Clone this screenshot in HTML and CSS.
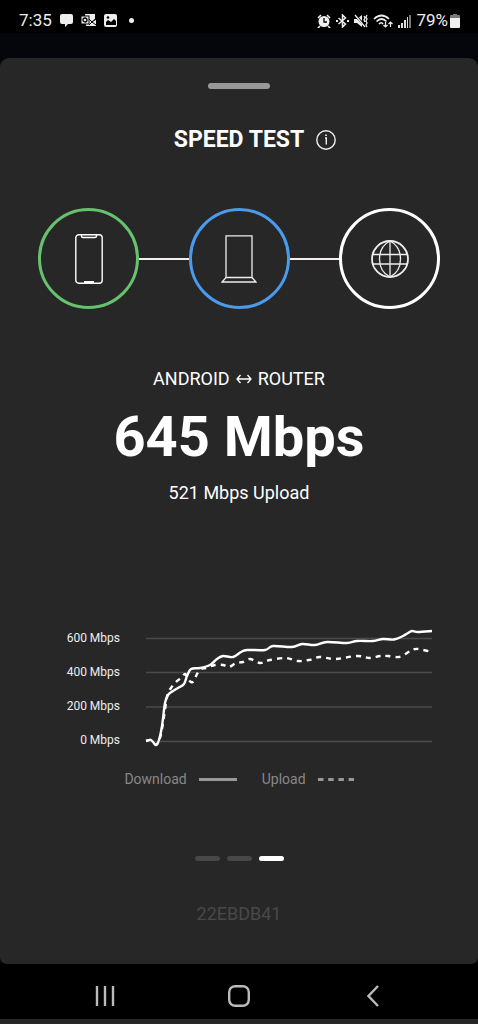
FILE: index.html
```html
<!DOCTYPE html>
<html lang="en">
<head>
<meta charset="utf-8">
<meta name="viewport" content="width=device-width, initial-scale=1">
<title>Speed Test</title>
<link rel="stylesheet" href="styles.css">
</head>
<body>
<header class="status">
  <div class="status-left">
    <span class="clock">7:35</span>
    <svg width="13" height="13" viewBox="0 0 13 13" fill="#eee"><path d="M2 0h9q2 0 2 2v6q0 2-2 2H8l-3 3v-3H2q-2 0-2-2V2q0-2 2-2z"/></svg>
    <svg width="15" height="13" viewBox="0 0 15 13"><path d="M4 0h10v5l-3 2 4-1v6H5z" fill="#eee"/><path d="M8 5l3 3 4-3M8 11l3-3 4 3" stroke="#000" fill="none"/><rect x="0" y="2" width="8" height="8" fill="#eee" stroke="#000"/><circle cx="4" cy="6" r="2" fill="none" stroke="#000" stroke-width="1.3"/></svg>
    <svg width="13" height="13" viewBox="0 0 13 13"><rect width="13" height="13" rx="2" fill="#eee"/><path d="M2 10V8l2-2 3 2 3-3 2 2v4H2z" fill="#000"/><circle cx="4" cy="3.500" r="1.300" fill="#000"/></svg>
    <span class="dot"></span>
  </div>
  <div class="status-right">
    <svg width="14" height="14" viewBox="0 0 14 14"><circle cx="7" cy="7.500" r="5.500" fill="#eee"/><path d="M1 4l3-3M13 4l-3-3M3 12l-2 2M11 12l2 2" stroke="#eee" stroke-width="1.600"/><path d="M7 4v4h3" fill="none" stroke="#000" stroke-width="1.300"/></svg>
    <svg width="13" height="14" viewBox="0 0 13 14" fill="none" stroke="#eee" stroke-width="1.500"><path d="M2.500 4l7 6-3 3V1l3 3-7 6"/><path d="M0 7h2M11 7h2" stroke-width="2"/></svg>
    <svg width="14" height="14" viewBox="0 0 14 14"><path d="M0 5h3l5-4v12L3 9H0z" fill="#eee"/><path d="M1 1l11 12" stroke="#000" stroke-width="2.500"/><path d="M1 1l10 12M10 2l1 2-1 2 1 2M13 1l-1 2 1 2-1 2 1 2-1 2 1 2" fill="none" stroke="#eee" stroke-width="1.300"/></svg>
    <svg width="20" height="14" viewBox="0 0 20 14" fill="none" stroke="#eee" stroke-width="1.700"><path d="M1 5q7.500-7 15 0M3.500 7.500q5-5 10 0M6 10q2.500-2.500 4 0"/><path d="M12.500 8v5M10.500 11l2 2 2-2M17.500 13V8M15.500 10l2-2 2 2" stroke-width="1.200"/></svg>
    <svg width="13" height="14" viewBox="0 0 13 14" fill="#ddd"><path d="M0 11h2v3H0zM3 9h2v5H3zM6 6h2v8H6z"/><path d="M9 3h1v11H9z"/><path d="M11 1h2v13h-2z" fill="#777"/></svg>
    <span class="charge">79%<svg width="10" height="14" viewBox="0 0 10 14"><path d="M3 0h4v1h2q1 0 1 1v3H0V2q0-1 1-1h2z" fill="#777"/><path d="M0 4h10v9q0 1-1 1H1q-1 0-1-1z" fill="#eee"/></svg></span>
  </div>
</header>

<main class="sheet">
  <div class="handle"></div>
  <div class="title-row">
    <h1 class="title">SPEED TEST</h1>
    <button class="info" type="button" aria-label="About the speed test">
      <svg width="20" height="20" viewBox="0 0 20 20" fill="none" stroke="#eee" stroke-width="1.400"><circle cx="10" cy="10" r="9.200"/><path d="M9 8h1.300v6.500"/><path d="M10 4.500v1.600" stroke-width="1.700"/></svg>
    </button>
  </div>

  <div class="route">
    <div class="node node-phone">
      <svg width="28" height="50" viewBox="0 0 28 50" fill="none" stroke="#fff" stroke-width="1.400"><rect x=".8" y=".8" width="26.400" height="48.400" rx="3"/><path d="M6.500 1v1q0 1.500 1.500 1.500h12q1.500 0 1.500-1.500V1"/><path d="M9 48h10" stroke-width="2"/></svg>
    </div>
    <div class="link"></div>
    <div class="node node-router">
      <svg width="36" height="48" viewBox="0 0 36 48" fill="none" stroke="#eee" stroke-width="1.300"><path d="M5 .8h26v41.700H5zM5 42.500L1 47h34l-4-4.500"/></svg>
    </div>
    <div class="link"></div>
    <div class="node">
      <svg width="38" height="38" viewBox="0 0 38 38" fill="none" stroke="#eee" stroke-width="1.300"><circle cx="19" cy="19" r="18" stroke-width="1.800"/><path d="M19 1v36M2 14.500h34M2 24h34"/><path d="M19 1C5 8 5 30 19 37C33 30 33 8 19 1z"/></svg>
    </div>
  </div>

  <section class="result">
    <p class="pair">ANDROID <svg width="16" height="10" viewBox="0 0 16 10" fill="none" stroke="#fff" stroke-width="1.300"><path d="M1 5h14M4.500 1L1 5l3.500 4M11.500 1L15 5l-3.500 4"/></svg> ROUTER</p>
    <p class="speed">645 Mbps</p>
    <p class="upload">521 Mbps Upload</p>
  </section>

  <section class="chart">
    <div class="axis"><span>600 Mbps</span><span>400 Mbps</span><span>200 Mbps</span><span>0 Mbps</span></div>
    <svg class="plot" viewBox="0 0 286 136" role="img" aria-label="Speed over time">
      <path class="grid" d="M0 17.500h286M0 51.500h286M0 86h286M0 120.500h286"/>
      <path class="line" id="download"/>
      <path class="line line-dashed" id="upload"/>
    </svg>
  </section>
  <div class="legend">
    <span class="key">Download <i class="swatch"></i></span>
    <span class="key">Upload <svg width="36" height="3" viewBox="0 0 36 3"><path d="M0 1.500h36" stroke="#999" stroke-width="3" stroke-dasharray="5.500 4.700"/></svg></span>
  </div>

  <div class="pages"><i class="page"></i><i class="page"></i><i class="page page-on"></i></div>
  <p class="code">22EBDB41</p>
</main>

<nav class="nav">
  <button type="button" aria-label="Recent apps"><svg width="20" height="22" viewBox="0 0 20 22" stroke="#bbb" stroke-width="2.400"><path d="M2 1v20M10 1v20M18 1v20"/></svg></button>
  <button type="button" aria-label="Home"><svg width="22" height="22" viewBox="0 0 22 22" fill="none" stroke="#bbb" stroke-width="2.400"><rect x="1.200" y="1.200" width="19.600" height="19.600" rx="6"/></svg></button>
  <button type="button" aria-label="Back"><svg width="12" height="22" viewBox="0 0 12 22" fill="none" stroke="#bbb" stroke-width="2.400"><path d="M11 1L1.500 11 11 21"/></svg></button>
</nav>
<script src="chart.js"></script>
</body>
</html>
```
FILE: styles.css
```css
* { box-sizing: border-box; }
body {
  margin: 0;
  min-height: 100vh;
  display: flex;
  flex-direction: column;
  background: #04060b;
  color: #fff;
  font-family: Roboto, "Liberation Sans", sans-serif;
}
p, h1 { margin: 0; }
svg { display: block; flex: none; }
button { padding: 0; border: 0; background: none; color: inherit; }

.status {
  display: flex;
  justify-content: space-between;
  height: 33px;
  padding: 8px 18px 0 19px;
  background: #000;
  color: #eee;
  font-size: 17px;
  line-height: 25px;
}
.status-left, .status-right, .charge { display: flex; align-items: center; }
.status-left { gap: 8px; }
.status-right { gap: 5px; }
.charge { gap: 2px; }
.dot { width: 5px; height: 5px; margin-left: 4px; border-radius: 50%; background: #eee; }

.sheet {
  flex: 1;
  margin-top: 25px;
  padding-top: 25px;
  border-radius: 9px 9px 7px 7px;
  background: #272727;
}
.handle { width: 62px; height: 6px; margin: 0 auto; border-radius: 3px; background: #999; }

.title-row {
  display: grid;
  grid-template-columns: 1fr auto 1fr;
  align-items: center;
  column-gap: 12px;
  margin-top: 34px;
}
.title { grid-column: 2; font-size: 23px; line-height: 34px; font-weight: 700; }
.info { justify-self: start; }

.route { display: flex; align-items: center; margin-top: 51px; padding: 0 38px; }
.node {
  display: flex;
  align-items: center;
  justify-content: center;
  flex: none;
  width: 101px;
  height: 101px;
  border: 3px solid #fff;
  border-radius: 50%;
}
.node-phone { border-color: #67c26e; }
.node-router { border-color: #4b9beb; }
.link { flex: 1; height: 2px; background: #f4eeee; }

.result { margin-top: 58px; text-align: center; }
.pair { display: flex; align-items: center; justify-content: center; gap: 6px; font-size: 18px; line-height: 24px; }
.speed { margin-top: 11px; font-size: 56px; line-height: 70px; font-weight: 700; }
.upload { margin-top: 9px; font-size: 18px; line-height: 24px; }

.chart { display: flex; gap: 26px; margin-top: 116px; padding: 0 46px; }
.axis { display: flex; flex-direction: column; width: 74px; text-align: right; font-size: 12px; line-height: 34px; color: #eee; }
.plot { flex: 1; min-width: 0; overflow: visible; }
.grid { stroke: #4b4b4b; stroke-width: 1.5; }
.line { fill: none; stroke: #fff; stroke-width: 2.4; }
.line-dashed { stroke-dasharray: 5 5; }

.legend { display: flex; justify-content: center; gap: 25px; margin-top: 12px; font-size: 14px; line-height: 20px; color: #888; }
.key { display: flex; align-items: center; gap: 12px; }
.swatch { width: 38px; height: 3px; background: #999; }

.pages { display: flex; justify-content: center; gap: 7px; margin-top: 67px; }
.page { width: 25px; height: 5px; border-radius: 3px; background: #484848; }
.page-on { background: #fff; }
.code { margin-top: 41px; text-align: center; font-size: 18px; line-height: 24px; color: #484848; }

.nav {
  display: grid;
  grid-template-columns: repeat(3, 1fr);
  place-items: center;
  height: 60px;
  padding: 8px 8% 0;
  border-bottom: 5px solid #262626;
  background: #000;
}
```
FILE: chart.js
```js
// Points in plot units, drawn as smooth curves.
const series = {
  download: [[0,120],[5,119],[10,124],[13,119],[16,105],[19,82],[22,74],[27,70],[32,67],[38,63],[41,55],[45,48],[54,47],[64,44],[71,38],[77,35],[87,36],[95,31],[101,29],[119,29],[127,25],[146,26],[156,23],[169,24],[181,21],[201,22],[211,20],[227,20],[237,18],[248,18.5],[257,15],[262,12],[266,10],[272,11],[286,10]],
  upload: [[0,120],[5,119],[10,124],[14,117],[17,102],[20,82],[22,72],[25,67],[30,61],[35,57],[39,53],[42,58],[45,61],[48,60],[51,53],[55,48],[60,47],[69,44],[77,44],[83,46],[90,42],[97,41],[104,38],[114,42],[124,39],[140,37],[152,40],[163,39],[174,36],[189,38],[211,35],[224,37],[234,35],[242,35],[253,36],[261,32],[266,29],[272,28],[286,31]]
};

function smooth(p) {
  let d = `M${p[0]}`;
  for (let i = 0; i < p.length - 1; i++) {
    const a = p[i - 1] || p[i], b = p[i], c = p[i + 1], e = p[i + 2] || c;
    d += `C${b[0] + (c[0] - a[0]) / 6} ${b[1] + (c[1] - a[1]) / 6} ${c[0] - (e[0] - b[0]) / 6} ${c[1] - (e[1] - b[1]) / 6} ${c}`;
  }
  return d;
}

for (const id in series) {
  document.getElementById(id).setAttribute("d", smooth(series[id]));
}
```
